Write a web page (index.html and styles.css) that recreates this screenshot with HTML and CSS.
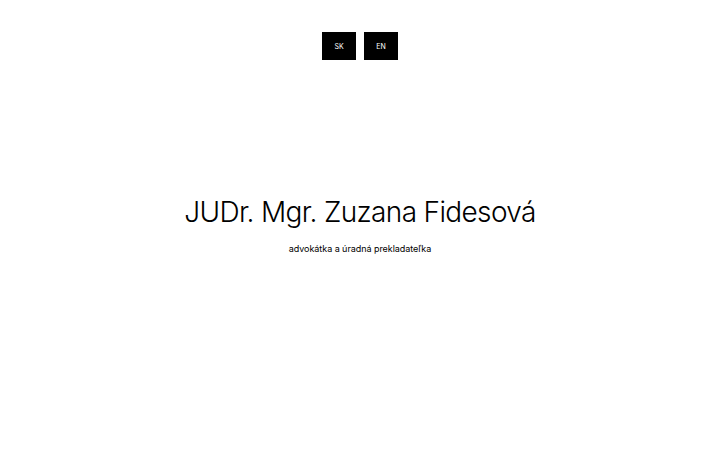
FILE: index.html
```html
<!DOCTYPE html>
<html lang="sk">
<head>
<meta charset="utf-8">
<title>JUDr. Mgr. Zuzana Fidesová</title>
<link rel="stylesheet" href="styles.css">
</head>
<body>
<div class="page">
  <nav class="langs">
    <a class="lang" href="#">SK</a>
    <a class="lang" href="#">EN</a>
  </nav>
  <main class="hero">
    <h1 class="name">JUDr. Mgr. Zuzana Fidesová</h1>
    <p class="role">advokátka a úradná prekladateľka</p>
  </main>
</div>
</body>
</html>
```

FILE: styles.css
```css
html, body {
  margin: 0;
  padding: 0;
  background: #fff;
}
body {
  font-family: Inter, "Noto Sans", sans-serif;
  color: #000;
}
.page {
  width: 720px;
  height: 450px;
  display: flex;
  flex-direction: column;
  align-items: center;
}
.langs {
  display: flex;
  gap: 8px;
  margin-top: 32px;
}
.lang {
  width: 34px;
  height: 28px;
  background: #000;
  color: #fff;
  font-size: 7px;
  text-decoration: none;
  display: flex;
  align-items: center;
  justify-content: center;
}
.hero {
  margin-top: 135px;
  display: flex;
  flex-direction: column;
  align-items: center;
}
.name {
  margin: 0;
  font-size: 28px;
  font-weight: 300;
  letter-spacing: -0.65px;
  line-height: 34px;
}
.role {
  margin: 14px 0 0;
  font-size: 9px;
  font-weight: 400;
  letter-spacing: -0.05px;
  line-height: 12px;
}
```
